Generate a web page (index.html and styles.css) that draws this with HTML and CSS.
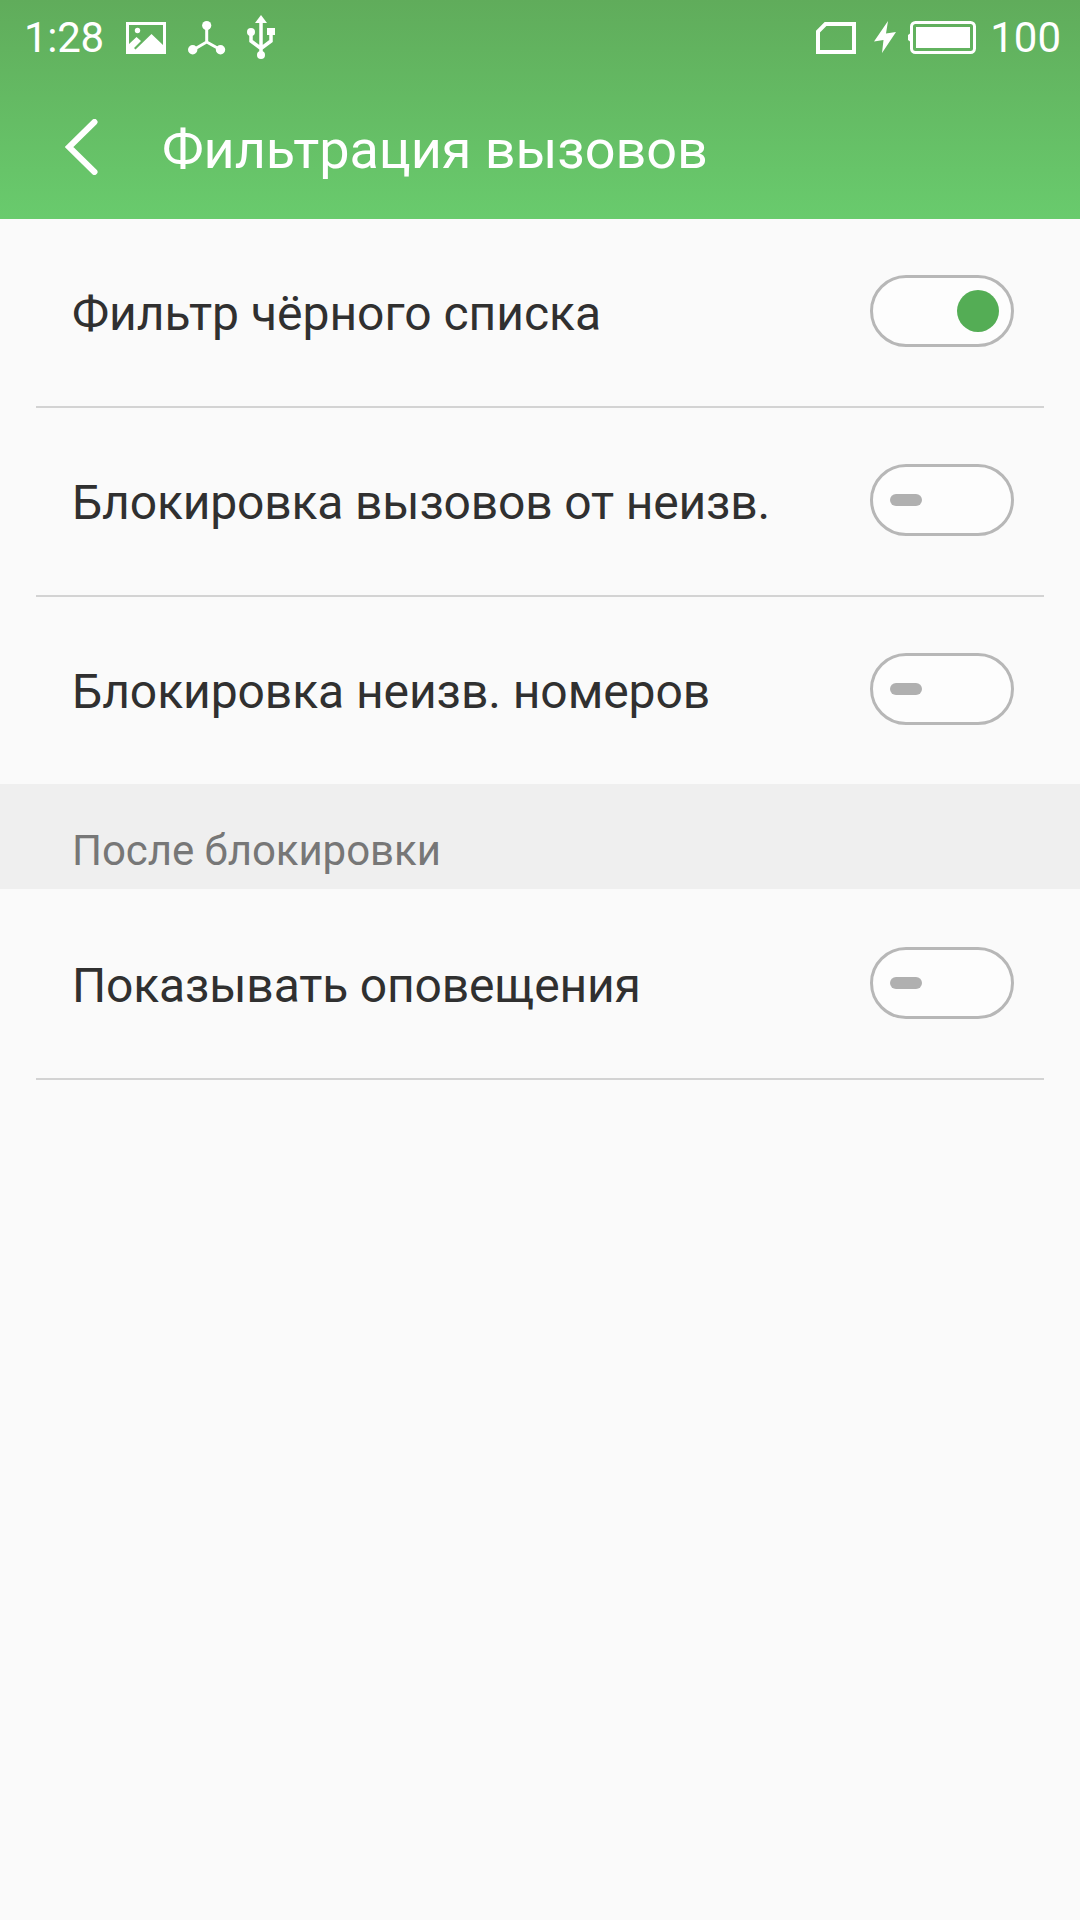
FILE: index.html
```html
<!DOCTYPE html>
<html lang="ru">
<head>
  <meta charset="UTF-8">
  <title>Фильтрация вызовов</title>
  <link rel="stylesheet" href="styles.css">
</head>
<body>
  <header class="header">
    <div class="status-bar">
      <span class="time">1:28</span>
      <svg class="icon-image" width="40" height="32" viewBox="0 0 40 32">
        <path fill="#fff" fill-rule="evenodd" d="M0 0H40V32H0ZM3 3V22L10.500 15L15 19L8 26L9.500 27.500L25.500 12L37 23V3Z"/>
        <circle cx="11.500" cy="8.500" r="2.700" fill="#fff"/>
      </svg>
      <svg class="icon-share" width="38" height="34" viewBox="0 0 38 34">
        <path d="M18.700 5V21L5 29M18.700 21L33 29" fill="none" stroke="#fff" stroke-width="3"/>
        <circle cx="18.700" cy="4.600" r="4.600" fill="#fff"/>
        <circle cx="4.700" cy="28.700" r="4.700" fill="#fff"/>
        <circle cx="32.500" cy="28.700" r="4.700" fill="#fff"/>
      </svg>
      <svg class="icon-usb" width="28" height="44" viewBox="0 0 28 44">
        <path d="M14 6V38M4 17V26L14 33.500L24 26V17" fill="none" stroke="#fff" stroke-width="3.500"/>
        <path d="M14 0L20 8H8ZM20 13H28V20H20Z" fill="#fff"/>
        <circle cx="4" cy="17" r="4" fill="#fff"/>
        <circle cx="14" cy="40" r="4" fill="#fff"/>
      </svg>
      <span class="spacer"></span>
      <svg class="icon-sim" width="40" height="32" viewBox="0 0 40 32">
        <path d="M2 30V9.500L9.500 2H38V30Z" fill="none" stroke="#fff" stroke-width="4"/>
      </svg>
      <svg class="icon-bolt" width="22" height="32" viewBox="0 0 22 32">
        <path d="M14 0L0 20.500L9.500 19L8 32L22 11L12 12.500Z" fill="#fff"/>
      </svg>
      <svg class="icon-battery" width="68" height="33" viewBox="0 0 68 33">
        <rect x="3.500" y="1.500" width="63" height="30" rx="4" fill="none" stroke="#fff" stroke-width="3"/>
        <path d="M8 6H62V27H8ZM0 14L2 12.500V20.500L0 19Z" fill="#fff"/>
      </svg>
      <span class="percent">100</span>
    </div>
    <div class="title-bar">
      <svg class="back" width="33" height="56" viewBox="0 0 33 56">
        <path d="M29.500 3L4 28L29.500 53" fill="none" stroke="#fff" stroke-width="6" stroke-linecap="round"/>
      </svg>
      <h1>Фильтрация вызовов</h1>
    </div>
  </header>

  <ul class="list">
    <li class="row">
      <span class="label">Фильтр чёрного списка</span>
      <span class="switch on"></span>
    </li>
    <li class="row">
      <span class="label tight">Блокировка вызовов от неизв.</span>
      <span class="switch"></span>
    </li>
    <li class="row last">
      <span class="label snug">Блокировка неизв. номеров</span>
      <span class="switch"></span>
    </li>
  </ul>

  <h2 class="section">После блокировки</h2>

  <ul class="list after">
    <li class="row">
      <span class="label tight">Показывать оповещения</span>
      <span class="switch"></span>
    </li>
  </ul>
</body>
</html>
```
FILE: styles.css
```css
* {
  box-sizing: border-box;
}
body {
  margin: 0;
  min-height: 1920px;
  background: #fafafa;
  color: #303030;
  font-family: Roboto, sans-serif;
}
svg {
  display: block;
  flex: none;
}

/* header */
.header {
  height: 219px;
  background: linear-gradient(#60ac5b, #69cb6d);
  color: #fff;
}
.status-bar {
  display: flex;
  align-items: flex-start;
  height: 75px;
  padding: 0 19px 0 24px;
  font-size: 42px;
  line-height: 75px;
}
.time {
  width: 102px;
  letter-spacing: -0.3px;
}
.icon-image {
  margin-top: 22px;
}
.icon-share {
  margin: 21px 0 0 22px;
}
.icon-usb {
  margin: 15px 0 0 21px;
}
.spacer {
  flex: 1;
}
.icon-sim {
  margin-top: 22px;
}
.icon-bolt {
  margin: 21px 0 0 18px;
}
.icon-battery {
  margin: 21px 0 0 12px;
}
.percent {
  width: 85px;
  text-align: right;
}
.title-bar {
  display: flex;
  align-items: center;
  height: 144px;
  padding-left: 65px;
}
h1 {
  margin: 4px 0 0 64px;
  font-size: 54px;
  font-weight: 400;
  letter-spacing: -0.07px;
}

/* list */
.list {
  margin: 0;
  padding: 0;
  list-style: none;
}
.list.after {
  padding-top: 2px;
}
.row {
  display: flex;
  align-items: center;
  justify-content: space-between;
  height: 189px;
  margin: 0 36px;
  padding: 0 30px 3px 36px;
  border-bottom: 2px solid #d3d3d3;
}
.row.last {
  height: 187px;
  border-bottom: none;
}
.label {
  padding-top: 4px;
  font-size: 48px;
}
.label.tight {
  letter-spacing: -0.16px;
}
.label.snug {
  letter-spacing: -0.07px;
}
.section {
  height: 105px;
  margin: 0;
  padding: 0 72px;
  background: #efefef;
  color: #777;
  font-size: 42px;
  font-weight: 400;
  line-height: 133px;
  letter-spacing: -0.06px;
}

/* switch */
.switch {
  display: flex;
  align-items: center;
  width: 144px;
  height: 72px;
  padding: 0 17px;
  border: 3px solid #b7b7b7;
  border-radius: 36px;
  background: #fdfdfd;
}
.switch::before {
  content: "";
  width: 32px;
  height: 12px;
  border-radius: 6px;
  background: #b0b0b0;
}
.switch.on {
  justify-content: flex-end;
  padding: 0 12px;
}
.switch.on::before {
  width: 42px;
  height: 42px;
  border-radius: 50%;
  background: #54ad55;
}
```
